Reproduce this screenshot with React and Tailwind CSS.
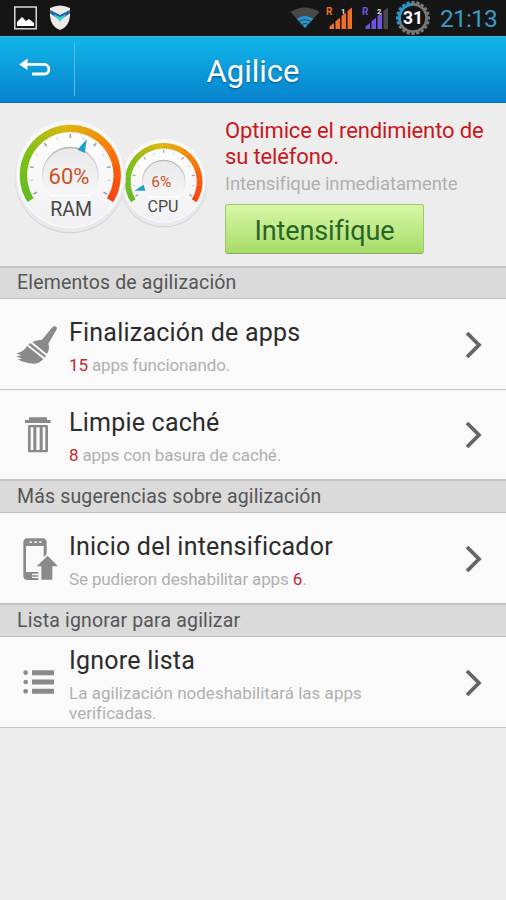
import React from "react";

const polar = (cx, cy, r, deg) => {
  const a = ((deg - 90) * Math.PI) / 180;
  return [cx + r * Math.cos(a), cy + r * Math.sin(a)];
};

const STOPS = [
  [0, [98, 186, 36]],
  [0.25, [130, 192, 20]],
  [0.48, [222, 182, 16]],
  [0.72, [250, 126, 8]],
  [0.85, [252, 92, 10]],
  [1, [246, 66, 16]],
];

const gaugeColor = (t) => {
  let i = 1;
  while (i < STOPS.length - 1 && t > STOPS[i][0]) i++;
  const [t0, c0] = STOPS[i - 1];
  const [t1, c1] = STOPS[i];
  const k = (t - t0) / (t1 - t0);
  return `rgb(${c0.map((v, n) => Math.round(v + (c1[n] - v) * k)).join(",")})`;
};

const START = -122;
const SWEEP = 244;
const STEPS = 61;

function Gauge({ cx, cy, r, value, label, valueSize, labelSize, valueX, valueY, labelX, labelY, dialR }) {
  const band = r * 0.145;
  const mid = r - band / 2;
  const inner = r * 0.55;
  const needle = START + SWEEP * (value / 100);
  const [cutL, cutLY] = polar(cx, cy, inner, -137);
  const [cutR, cutRY] = polar(cx, cy, inner, 137);

  return (
    <g>
      <circle cx={cx} cy={cy + 2.4} r={dialR} fill="#cfcfd6" />
      <circle cx={cx} cy={cy + 1.4} r={dialR} fill="#e9e9ec" />
      <circle cx={cx} cy={cy - 1} r={dialR - 1.5} fill="#f8f8f9" />
      <circle cx={cx} cy={cy} r={r + 0.8} fill="url(#face)" />
      {Array.from({ length: STEPS }, (_, i) => {
        const a0 = START + (SWEEP * i) / STEPS;
        const a1 = START + (SWEEP * (i + 1)) / STEPS + (i < STEPS - 1 ? 0.6 : 0);
        const [x0, y0] = polar(cx, cy, mid, a0);
        const [x1, y1] = polar(cx, cy, mid, a1);
        return (
          <path
            key={i}
            d={`M${x0} ${y0}A${mid} ${mid} 0 0 1 ${x1} ${y1}`}
            stroke={gaugeColor(i / (STEPS - 1))}
            strokeWidth={band}
            fill="none"
          />
        );
      })}
      {Array.from({ length: 13 }, (_, i) => {
        const a = -117 + i * 19.5;
        const long = i % 2 === 0;
        const [x0, y0] = polar(cx, cy, r * (long ? 0.82 : 0.79), a);
        const [x1, y1] = polar(cx, cy, r * (long ? 0.74 : 0.75), a);
        return (
          <path
            key={i}
            d={`M${x0} ${y0}L${x1} ${y1}`}
            stroke="#9aa0a8"
            strokeWidth={long ? r * 0.032 : 0.8}
          />
        );
      })}
      <path
        d={`M${cutL} ${cutLY}A${inner} ${inner} 0 1 1 ${cutR} ${cutRY}Z`}
        fill="url(#hub)"
        stroke="url(#hubEdge)"
        strokeWidth="1.3"
      />
      <path
        d={`M${cx} ${cy - r * 0.79}L${cx - r * 0.08} ${cy - r * 0.52}L${cx + r * 0.08} ${cy - r * 0.52}Z`}
        fill="#1ba2c8"
        transform={`rotate(${needle} ${cx} ${cy})`}
      />
      <text x={valueX} y={valueY} textAnchor="middle" fontSize={valueSize} fill="#cc5326">
        {value}%
      </text>
      <text x={labelX} y={labelY} textAnchor="middle" fontSize={labelSize} fill="#484848">
        {label}
      </text>
    </g>
  );
}

function Gauges() {
  return (
    <svg className="h-[140px] w-[225px] shrink-0 font-[Roboto,sans-serif]" viewBox="0 105 225 140">
      <defs>
        <linearGradient id="face" x1="0" y1="0" x2="0" y2="1">
          <stop offset="0" stopColor="#fff" />
          <stop offset="1" stopColor="#f1f1f3" />
        </linearGradient>
        <linearGradient id="hub" x1="0" y1="0" x2="0" y2="1">
          <stop offset="0" stopColor="#e9e9eb" />
          <stop offset="1" stopColor="#f6f6f7" />
        </linearGradient>
        <linearGradient id="hubEdge" x1="0" y1="0" x2="0" y2="1">
          <stop offset="0" stopColor="#b4b4b8" />
          <stop offset="1" stopColor="#fff" />
        </linearGradient>
      </defs>
      <Gauge cx={163.7} cy={181.7} r={38.7} dialR={43.5} value={6} label="CPU" valueSize={15.5} labelSize={16} valueX={161.3} valueY={187} labelX={163} labelY={212} />
      <Gauge cx={70.3} cy={175.3} r={50.5} dialR={55.5} value={60} label="RAM" valueSize={22} labelSize={19.5} valueX={69} valueY={184} labelX={71.2} labelY={216} />
    </svg>
  );
}

const Broom = () => (
  <svg className="mt-0.5 ml-4 h-[38px] w-[41px]" viewBox="0 0 123 114" fill="#8a8a8a">
    <path d="M109 4C113 0 119 0 122 4C124 8 121 12 119 15L97 53C101 63 99 74 93 84L49 48C60 42 71 42 78 41Z" />
    <path d="M43 51L90 89L87 95L37 56Z" />
    <path d="M33 60L82 99C75 107 67 112 55 113C35 112 18 108 5 100L18 98L1 91L16 88L1 82C15 80 25 73 33 60Z" />
  </svg>
);

const Trash = () => (
  <svg className="ml-[25px] h-[36px] w-[26px]" viewBox="0 0 78 108" fill="#8a8a8a">
    <path d="M12 3Q12 1 15 1H63Q66 1 66 3V9H77V18H0V9H12Z" />
    <path
      fillRule="evenodd"
      d="M13 24H65Q69 24 69 28V102Q69 106 65 106H13Q9 106 9 102V28Q9 24 13 24ZM17 31V99H25V31ZM34 31V99H44V31ZM53 31V99H61V31Z"
    />
  </svg>
);

const PhoneUp = () => (
  <svg className="mt-0.5 ml-[23px] h-[42px] w-[35px]" viewBox="0 0 105 126" fill="#8a8a8a">
    <path
      fillRule="evenodd"
      d="M13 1H58Q71 1 71 14V49L62 58V24H9V102H46V107H27V112H46V116H27V120H46V126H13Q1 126 1 113V14Q1 1 13 1ZM20 10V15H26V10ZM34 10V15H41V10ZM49 10V15H55V10Z"
    />
    <path d="M74 53L105 85H88V125H55V85H41Z" />
  </svg>
);

const List = () => (
  <svg className="ml-[23px] h-[26px] w-[32px]" viewBox="0 0 96 78" fill="#8a8a8a">
    {[11, 39, 67].map((y) => (
      <g key={y}>
        <circle cx="8" cy={y} r="7" />
        <rect x="27" y={y - 7.5} width="66" height="15" rx="1.5" />
      </g>
    ))}
  </svg>
);

const Chevron = () => (
  <svg className="mt-px mr-6 h-[28px] w-[17px] shrink-0" viewBox="0 0 17 28">
    <path d="M2 2L14 14L2 26" fill="none" stroke="#666" strokeWidth="3.8" />
  </svg>
);

function Section({ children, className = "h-[34px]" }) {
  return (
    <h2
      className={`flex items-center border-t-2 border-b border-t-[#c4c4c4] border-b-[#bdbdbd] bg-[#dadada] pl-[17px] text-[19.5px] leading-none tracking-[0.16px] text-[#555] ${className}`}
    >
      {children}
    </h2>
  );
}

function Row({ icon, title, children, className = "", textClass = "tracking-[-0.14px]" }) {
  return (
    <div className={`flex items-center bg-[#fafafa] ${className}`}>
      <div className="w-[69px] shrink-0">{icon}</div>
      <div className="flex-1 pt-1">
        <div className="text-[25px] leading-[30px] tracking-[0.22px] text-[#2c2c2c]">{title}</div>
        <p className={`mt-[7px] max-w-[310px] text-[17px] leading-5 text-[#b0b0b0] ${textClass}`}>
          {children}
        </p>
      </div>
      <Chevron />
    </div>
  );
}

const Count = ({ children }) => <span className="text-[#bf2634]">{children}</span>;

function Signal({ number, color, bars }) {
  return (
    <svg className="h-[26px] w-[28px]" viewBox="0 0 28 26">
      <text x="0" y="9.5" fontSize="10" fontWeight="700" fill={color}>R</text>
      {[0, 1, 2, 3].map((i) => (
        <path
          key={i}
          d={`M${3.5 + i * 6} 24V${21.5 - i * 5.2}L${8 + i * 6} ${18 - i * 5.2}V24Z`}
          fill={i < bars ? color : "#4a4a4a"}
        />
      ))}
      <text x="15" y="9" fontSize="7.5" fontWeight="700" fill="#e8e8e8">{number}</text>
    </svg>
  );
}

function BatteryGear() {
  return (
    <svg className="h-[36px] w-[36px]" viewBox="-18 -18 36 36">
      {Array.from({ length: 20 }, (_, i) => (
        <rect
          key={i}
          x="-1.6"
          y="-17"
          width="3.2"
          height="4"
          fill={i > 13 ? "#2598c8" : "#777"}
          transform={`rotate(${i * 18})`}
        />
      ))}
      <circle r="13.6" fill="none" stroke="#777" strokeWidth="2.8" />
      <path d="M-12.9 4.2A13.6 13.6 0 0 1 0 -13.6" fill="none" stroke="#2598c8" strokeWidth="2.8" />
      <text y="5.5" textAnchor="middle" fontSize="17.5" fontWeight="700" fill="#fff">31</text>
    </svg>
  );
}

function StatusBar() {
  return (
    <div className="flex h-9 items-center bg-[#151515]">
      <svg className="ml-[14px] h-[24px] w-[23px]" viewBox="0 0 23 24">
        <rect x="0.8" y="1" width="21.4" height="21.8" fill="none" stroke="#e6e6e6" strokeWidth="1.4" />
        <path d="M3 20V16L8 11L12 15L15 13L20 17V20Z" fill="#fff" />
      </svg>
      <svg className="ml-[12px] h-[26px] w-[22px]" viewBox="0 0 22 26">
        <path d="M1 3Q11 -2 21 3V11Q20 22 11 25Q2 22 1 11Z" fill="#ecebe6" />
        <path d="M1.2 5L11 10L20.8 5V8.5L11 15L1.2 8.5Z" fill="#235e9f" />
        <path d="M4 9L11 12L18 9L11 16.5Z" fill="#35d2d4" />
      </svg>
      <div className="flex-1" />
      <svg className="-mt-px h-[22px] w-[30px]" viewBox="0 0 30 22">
        <path d="M15 21L0.5 5Q15 -4 29.5 5Z" fill="#484848" />
        <path d="M15 21L6.6 11.8Q15 6 23.4 11.8Z" fill="#2a94c4" />
        <path d="M8.5 14.8Q15 10.5 21.5 14.8M11.2 17.6Q15 15.2 18.8 17.6" fill="none" stroke="#174c68" strokeWidth="1" />
      </svg>
      <div className="ml-[6px]">
        <Signal number="1" color="#ee7023" bars={4} />
      </div>
      <div className="ml-[8px]">
        <Signal number="2" color="#7154dc" bars={3} />
      </div>
      <div className="-mt-px ml-[5px]">
        <BatteryGear />
      </div>
      <span className="mt-0.5 mr-[9px] ml-[9px] w-[57px] text-[24.5px] leading-none tracking-[-0.8px] whitespace-nowrap text-[#3a9cc8]">
        21:13
      </span>
    </div>
  );
}

function Header() {
  return (
    <header className="flex h-[67px] items-center border-t border-b border-t-[#3fb3d8] border-b-[#0870b0] bg-linear-to-b from-[#12b6e8] to-[#0982cd]">
      <button className="flex h-[53px] w-[75px] items-center border-r border-[#5bbbe6] pb-[5px] pl-[19px]" aria-label="Volver">
        <svg className="h-[18px] w-[32px]" viewBox="0 0 32 18">
          <path d="M0 6.5L8.5 0.5V12Z" fill="#fff" />
          <path d="M7 6.3H25C31.5 6.3 31.5 16 25 16H13" fill="none" stroke="#fff" strokeWidth="2.8" />
        </svg>
      </button>
      <h1 className="mr-[75px] flex-1 pt-[3px] text-center text-[31px] leading-none text-white [text-shadow:0_1px_2px_rgba(0,60,110,0.7)]">
        Agilice
      </h1>
    </header>
  );
}

export default function App() {
  return (
    <div className="min-h-[900px] w-[506px] overflow-hidden bg-[#ededed] font-[Roboto,'Noto_Sans',sans-serif]">
      <StatusBar />
      <Header />

      <section className="flex h-[163px] pt-[2px]">
        <Gauges />
        <div className="pt-[13px]">
          <p className="w-[270px] text-[22px] leading-[25.5px] tracking-[-0.14px] text-[#c8181d]">
            Optimice el rendimiento de su teléfono.
          </p>
          <p className="mt-[3px] text-[18.5px] leading-[24px] tracking-[-0.11px] text-[#b0b0b0]">
            Intensifique inmediatamente
          </p>
          <button className="mt-[8px] h-[50px] w-[199px] rounded-[3px] border border-[#9cc873] border-b-[#88aa63] bg-linear-to-b from-[#d9f7a6] to-[#a8dc68] pt-1 text-[27px] leading-none tracking-[-0.12px] text-[#286528]">
            Intensifique
          </button>
        </div>
      </section>

      <Section className="h-[33px]">Elementos de agilización</Section>
      <Row icon={<Broom />} title="Finalización de apps" className="h-[91px] border-b border-[#c4c4c4]">
        <Count>15</Count> apps funcionando.
      </Row>
      <Row icon={<Trash />} title="Limpie caché" className="h-[89px]">
        <Count>8</Count> apps con basura de caché.
      </Row>

      <Section>Más sugerencias sobre agilización</Section>
      <Row icon={<PhoneUp />} title="Inicio del intensificador" className="h-[90px]">
        Se pudieron deshabilitar apps <Count>6</Count>.
      </Row>

      <Section>Lista ignorar para agilizar</Section>
      <Row
        icon={<List />}
        title="Ignore lista"
        className="h-[91px] border-b border-[#c4c4c4]"
        textClass="tracking-[0.02px]"
      >
        La agilización nodeshabilitará las apps verificadas.
      </Row>
    </div>
  );
}
